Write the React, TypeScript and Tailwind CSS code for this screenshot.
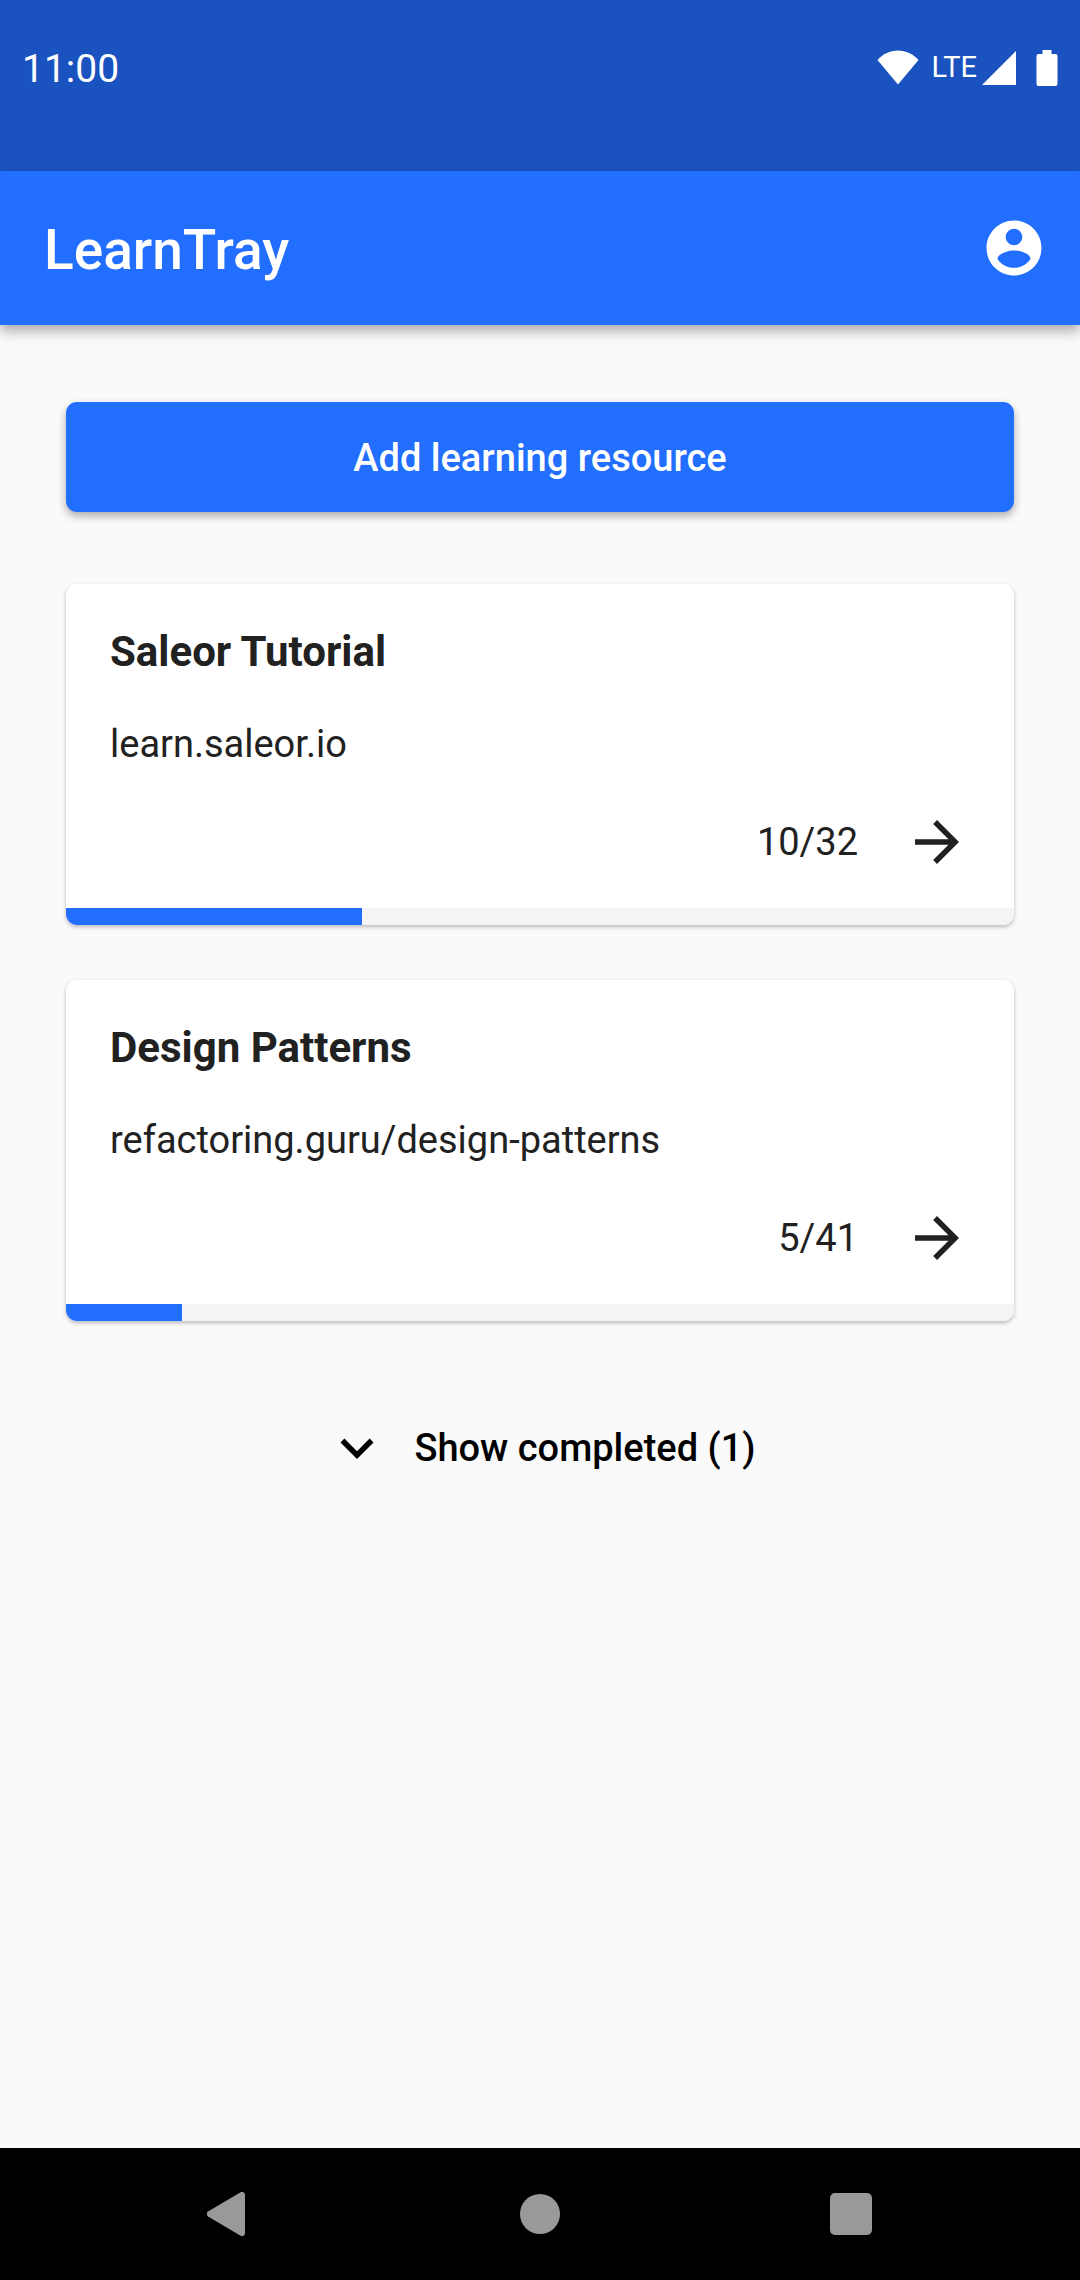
import React from 'react';
import { MdArrowForward } from 'react-icons/md';

interface Resource {
  id: string;
  name: string;
  url: string;
  done: number;
  total: number;
}

const resources: Resource[] = [
  { id: 'saleor', name: 'Saleor Tutorial', url: 'learn.saleor.io', done: 10, total: 32 },
  { id: 'patterns', name: 'Design Patterns', url: 'refactoring.guru/design-patterns', done: 5, total: 41 },
];

const StatusBar: React.FC = () => (
  <div className="flex h-[171px] items-center justify-between bg-[#1a52bf] px-[22px] pb-9 text-white">
    <span className="pt-1 text-[39px] leading-none">11:00</span>
    <div className="flex items-center">
      <svg className="h-[35px] w-[42px]" viewBox="0 0 42 35" fill="currentColor" aria-hidden="true">
        <path d="M21 34.500L.5 10C6 4 13 .5 21 .5S36 4 41.500 10z" />
      </svg>
      <span className="ml-3 text-[29px] leading-none">LTE</span>
      <svg className="ml-[5px] h-[35px] w-[35px]" viewBox="0 0 35 35" fill="currentColor" aria-hidden="true">
        <path d="M34 1v34H0z" />
      </svg>
      <svg className="ml-[19px] h-[36px] w-[22px]" viewBox="0 0 22 36" fill="currentColor" aria-hidden="true">
        <path d="M6.500 0h9v4h4a2 2 0 0 1 2 2v28a2 2 0 0 1-2 2h-17a2 2 0 0 1-2-2V6a2 2 0 0 1 2-2h4z" />
      </svg>
    </div>
  </div>
);

const AppBar: React.FC = () => (
  <header className="relative flex h-[154px] items-center justify-between bg-[#226eff] pr-[33px] pl-11 text-white shadow-[0_6px_12px_rgba(0,0,0,0.32)]">
    <h1 className="pt-1 text-[55px] leading-none font-medium">LearnTray</h1>
    <button type="button" aria-label="Account">
      <svg className="size-[66px]" viewBox="0 0 24 24" fill="currentColor" aria-hidden="true">
        <path d="M12 2C6.480 2 2 6.480 2 12s4.480 10 10 10 10-4.480 10-10S17.520 2 12 2zm0 3c1.660 0 3 1.340 3 3s-1.340 3-3 3-3-1.340-3-3 1.340-3 3-3zm0 14.200c-2.500 0-4.710-1.280-6-3.220.03-1.990 4-3.080 6-3.080 1.990 0 5.970 1.090 6 3.080-1.290 1.940-3.500 3.220-6 3.220z" />
      </svg>
    </button>
  </header>
);

const ResourceCard: React.FC<{ resource: Resource }> = ({ resource }) => {
  const { name, url, done, total } = resource;

  return (
    <article className="overflow-hidden rounded-[11px] bg-white shadow-[0_2px_4px_rgba(0,0,0,0.26)]">
      <div className="px-11 pt-[41px] pb-[33px]">
        <h2 className="text-[42px] leading-[54px] font-bold">{name}</h2>
        <p className="mt-[38px] text-[38px] leading-[54px]">{url}</p>
        <div className="mt-[38px] flex items-center justify-end gap-[46px]">
          <span className="text-[38px] leading-[54px]">{`${done}/${total}`}</span>
          <button type="button" aria-label={`Open ${name}`}>
            <MdArrowForward className="size-[66px]" />
          </button>
        </div>
      </div>
      <div className="h-[17px] bg-[#f4f4f4]">
        <div className="h-full bg-[#226eff]" style={{ width: `${(done / total) * 100}%` }} />
      </div>
    </article>
  );
};

const NavBar: React.FC = () => (
  <nav className="flex h-[132px] items-center bg-black px-[73px] text-[#999999]">
    <button type="button" aria-label="Back" className="flex flex-1 justify-center">
      <svg className="h-[46px] w-[46px]" viewBox="0 0 46 46" fill="currentColor" aria-hidden="true">
        <path d="M34.600 1.200a3 3 0 0 1 4.400 2.600v38.400a3 3 0 0 1-4.400 2.600L2 25.400a3 3 0 0 1 0-4.800z" />
      </svg>
    </button>
    <button type="button" aria-label="Home" className="flex flex-1 justify-center">
      <span className="size-10 rounded-full bg-current" />
    </button>
    <button type="button" aria-label="Recents" className="flex flex-1 justify-center">
      <span className="size-[42px] rounded-[5px] bg-current" />
    </button>
  </nav>
);

const App: React.FC = () => {
  return (
    <div className="flex min-h-screen flex-col bg-[#fafafa] font-[Roboto,sans-serif] text-[#212121]">
      <StatusBar />
      <AppBar />
      <main className="flex flex-1 flex-col gap-[72px] px-[66px] pt-[77px]">
        <button
          type="button"
          className="h-[110px] rounded-[11px] bg-[#226eff] pt-0.5 text-[38px] font-medium text-white shadow-[0_4px_8px_rgba(0,0,0,0.32)]"
        >
          Add learning resource
        </button>
        <section className="flex flex-col gap-[55px]">
          {resources.map((r) => (
            <ResourceCard key={r.id} resource={r} />
          ))}
        </section>
        <button type="button" className="flex h-[110px] items-center justify-center gap-6 text-[38px] font-medium text-black">
          <svg className="size-[66px]" viewBox="0 0 24 24" fill="currentColor" aria-hidden="true">
            <path d="M7.410 8.590L12 13.170l4.590-4.580L18 10l-6 6-6-6z" />
          </svg>
          Show completed (1)
        </button>
      </main>
      <NavBar />
    </div>
  );
};

export default App;
